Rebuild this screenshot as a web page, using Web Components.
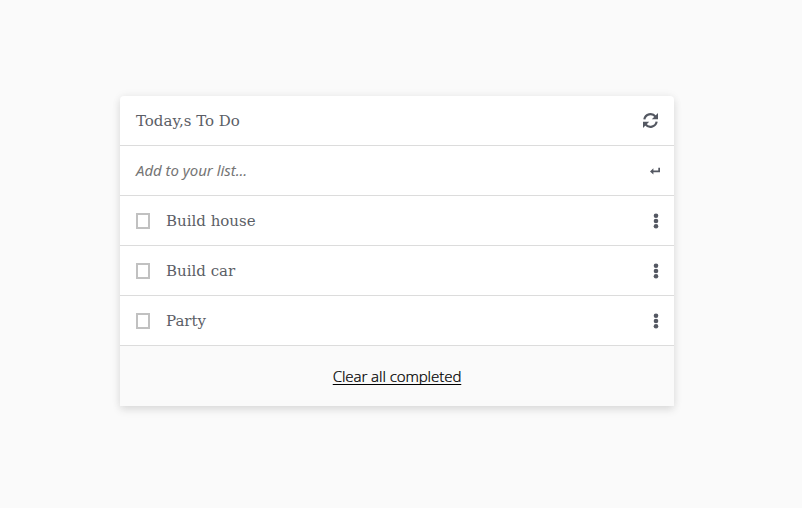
<!DOCTYPE html>
<html lang="en"><head><meta charset="utf-8"><title>To Do</title>
<style>body{margin:0;min-height:100vh;display:flex;align-items:flex-start;background:#fafafa;color:#5b5e66;font:15px "DejaVu Serif",serif}</style></head>
<body>
<todo-card>
<todo-row><span>Today,s To Do</span><todo-icon slot="end" name="sync"></todo-icon></todo-row>
<todo-row><todo-entry>Add to your list...</todo-entry><todo-icon slot="end" name="enter"></todo-icon></todo-row>
<todo-item>Build house</todo-item>
<todo-item>Build car</todo-item>
<todo-item>Party</todo-item>
<todo-footer>Clear all completed</todo-footer>
</todo-card>
<script>
const define = (name, html) => customElements.define(name, class extends HTMLElement {
  constructor() {
    super();
    this.attachShadow({mode: 'open'}).innerHTML = html;
  }
});
const icons = {
  sync: '<svg width="15" height="16" viewBox="0 0 15 16"><path d="M1.33 6.4A6.3 6.3 0 0 1 12.5 3.7M13.67 8.6A6.3 6.3 0 0 1 2.5 11.3" fill="none" stroke="#545862" stroke-width="2.2"/><path d="M15 0V6.2H8.8zM0 15V8.8H6.2z"/></svg>',
  enter: '<svg width="10" height="8" viewBox="0 0 10 8"><path d="M0 4.4 3.4 1.2V3.5H8.3V.8H10V5.2H3.4V7.5z"/></svg>',
  dots: '<svg width="6" height="16" viewBox="0 0 6 16"><circle cx="3" cy="2.8" r="2.3"/><circle cx="3" cy="8" r="2.3"/><circle cx="3" cy="13.2" r="2.3"/></svg>'
};
customElements.define('todo-icon', class extends HTMLElement {
  connectedCallback() {
    const root = this.shadowRoot || this.attachShadow({mode: 'open'});
    root.innerHTML = `<style>:host{display:block}svg{display:block;fill:#545862}:host([name=enter]){margin-right:-2px}:host([name=dots]){margin-right:-1px}</style>${icons[this.getAttribute('name')]}`;
  }
});
define('todo-card', `<style>
:host{display:flex;flex-direction:column;width:554px;margin:96px 0 0 120px;background:#fff;border-radius:4px 4px 0 0;box-shadow:0 4px 8px rgba(0,0,0,.1),0 0 10px rgba(0,0,0,.06)}
</style><slot></slot>`);
define('todo-row', `<style>
:host{display:flex;align-items:center;justify-content:space-between;box-sizing:border-box;height:50px;padding:0 16px;border-bottom:1px solid #dcdcdc}
</style><slot></slot><slot name="end"></slot>`);
define('todo-entry', `<style>
:host{display:block;padding-bottom:2px;font:italic 15px "Noto Sans",sans-serif;letter-spacing:-.03px;color:#757575}
</style><slot></slot>`);
define('todo-item', `<style>
:host{display:block}
div{display:flex;align-items:center;gap:16px}
i{box-sizing:border-box;width:14px;height:16px;border:2px solid #c1c1c1;margin-top:1px}
</style><todo-row><div><i></i><span><slot></slot></span></div><todo-icon slot="end" name="dots"></todo-icon></todo-row>`);
define('todo-footer', `<style>
:host{display:flex;align-items:center;justify-content:center;height:60px;background:#fafafa}
span{font:300 15px "Noto Sans",sans-serif;letter-spacing:-.1px;color:#000;-webkit-text-stroke:.2px #000;text-decoration:underline;text-decoration-skip-ink:none;text-decoration-thickness:1px;text-underline-offset:2px}
</style><span><slot></slot></span>`);
</script>
</body></html>
